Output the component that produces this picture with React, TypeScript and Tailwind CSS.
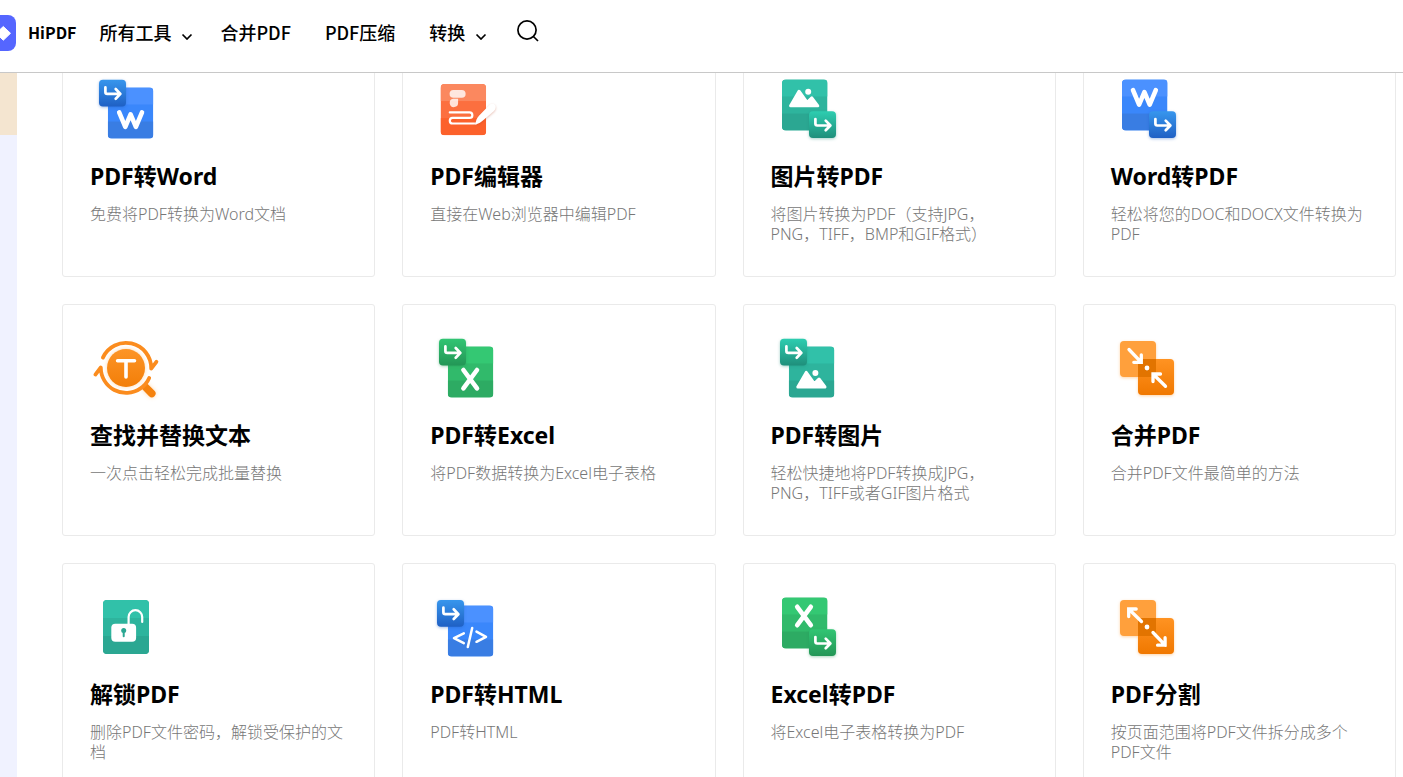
import React, { useId } from "react";
import type { ReactNode } from "react";

type Tone = "blue" | "green" | "teal";

const tones: Record<Tone, { bands: [string, string, string]; badge: [string, string] }> = {
  blue: { bands: ["#4b91ff", "#3a87fb", "#397de3"], badge: ["#3796ed", "#1f60c4"] },
  green: { bands: ["#34c873", "#31ba6b", "#2dab63"], badge: ["#31c573", "#239656"] },
  teal: { bands: ["#31c1a9", "#2eb49d", "#2ba792"], badge: ["#2dcdb0", "#1f8f7b"] },
};

function Sheet({ x, y, w = 45.5, h = 51.2, bands }: { x: number; y: number; w?: number; h?: number; bands: string[] }) {
  const clip = useId();
  const third = h / 3;
  return (
    <>
      <clipPath id={clip}>
        <rect x={x} y={y} width={w} height={h} rx="4" />
      </clipPath>
      <g clipPath={`url(#${clip})`}>
        <rect x={x} y={y} width={w} height={h} fill={bands[1]} />
        <rect x={x} y={y} width={w} height={third} fill={bands[0]} />
        <rect x={x} y={y + third * 2} width={w} height={third} fill={bands[2]} />
      </g>
    </>
  );
}

function Badge({ x, y, tone }: { x: number; y: number; tone: Tone }) {
  const id = useId();
  const [from, to] = tones[tone].badge;
  return (
    <g transform={`translate(${x} ${y})`}>
      <linearGradient id={id} x1="0" y1="0" x2="0" y2="1">
        <stop stopColor={from} />
        <stop offset="1" stopColor={to} />
      </linearGradient>
      <rect
        width="27"
        height="26.8"
        rx="4"
        fill={`url(#${id})`}
        style={{ filter: `drop-shadow(0 1px 1.5px ${to}66)` }}
      />
      <path
        d="M6.4 7.700v4.600q0 1.900 1.900 1.900h12.600M16.700 9.300l4.700 4.900-4.700 4.800"
        fill="none"
        stroke="#fff"
        strokeWidth="2.7"
        strokeLinecap="round"
        strokeLinejoin="round"
      />
    </g>
  );
}

const glyphs = {
  w: (
    <path
      d="M29.2 39.4 35.3 53.9 40.6 41.4 45.9 53.9 52 39.4"
      fill="none"
      stroke="#fff"
      strokeWidth="4.6"
      strokeLinecap="round"
      strokeLinejoin="round"
    />
  ),
  x: <path d="M33.4 38 47 56.4M47 38 33.4 56.4" stroke="#fff" strokeWidth="4.6" strokeLinecap="round" />,
  image: (
    <g fill="#fff" stroke="#fff" strokeLinejoin="round">
      <path d="M26.8 55 35.2 40.4 43.3 51.6 48 47 54 55Z" strokeWidth="3" />
      <circle cx="44.4" cy="41" r="3" stroke="none" />
    </g>
  ),
  code: (
    <path
      d="M33.8 42.4 24 47.2 33.8 52.2M42.2 37 37.8 56M46.5 40.6 56 45.8 46.5 50.8"
      fill="none"
      stroke="#fff"
      strokeWidth="2.5"
      strokeLinecap="round"
      strokeLinejoin="round"
    />
  ),
};

function IconFrame({ children }: { children: ReactNode }) {
  return (
    <svg className="block size-[72px]" viewBox="0 0 72 72" aria-hidden="true">
      {children}
    </svg>
  );
}

function FromPdf({ tone, glyph, badgeX = 9, badgeY = 6.7 }: { tone: Tone; glyph: ReactNode; badgeX?: number; badgeY?: number }) {
  return (
    <IconFrame>
      <Sheet x={17.8} y={14.4} bands={tones[tone].bands} />
      {glyph}
      <Badge x={badgeX} y={badgeY} tone={tone} />
    </IconFrame>
  );
}

function ToPdf({ tone, glyph }: { tone: Tone; glyph: ReactNode }) {
  return (
    <IconFrame>
      <Sheet x={11} y={6.4} bands={tones[tone].bands} />
      <g transform="translate(-7.2 -22.2)">{glyph}</g>
      <Badge x={38} y={38.3} tone={tone} />
    </IconFrame>
  );
}

function EditorIcon() {
  return (
    <IconFrame>
      <Sheet x={10.6} y={11} bands={["#fb885f", "#fc6f3f", "#fc612b"]} />
      <rect x="19.6" y="17" width="16" height="7.7" rx="3.8" fill="#fff" opacity=".8" />
      <path d="M23.2 25.8h4.9v3.8a4.2 4.2 0 1 1-4.9-3.8Z" fill="#fff" opacity=".8" />
      <path
        d="M19.8 39.4H39.6a2.7 2.7 0 0 1 0 5.5H22.6a2.8 2.8 0 0 0 0 5.6H46"
        fill="none"
        stroke="#fff"
        strokeWidth="2.2"
        strokeLinecap="round"
      />
      <path
        d="M45.4 51.6c.3-3.9 1.4-6.8 3.800-9.200L59.200 32.200c2-2 4.200-1.900 5.600-.5s1.200 4.200-.8 6.200L53.800 46.800c-2.400 2.100-5 4-8.400 4.800Z"
        fill="#fff"
        style={{ filter: "drop-shadow(0 1px 1px #b9432055)" }}
      />
    </IconFrame>
  );
}

function FindReplaceIcon() {
  const id = useId();
  return (
    <IconFrame>
      <linearGradient id={id} x1="0" y1="8" x2="0" y2="65" gradientUnits="userSpaceOnUse">
        <stop stopColor="#ff9a2e" />
        <stop offset="1" stopColor="#f07800" />
      </linearGradient>
      <g style={{ filter: "drop-shadow(0 0 2px #ff9a2e66)" }}>
        <circle cx="36" cy="36" r="19" fill={`url(#${id})`} />
        <path d="M55.5 55.200 61.800 61.500" stroke="#f5810c" strokeWidth="7.5" strokeLinecap="round" />
      </g>
      <g fill="none" stroke="#fb8c1e" strokeWidth="3.8" strokeLinecap="round" strokeLinejoin="round">
        <path d="M12.900 25.600A25.300 25.300 0 0 1 61.200 36.600L66.400 29.800" />
        <path d="M5.400 42.600 10.800 35.500A25.300 25.300 0 0 0 50.500 56.400Q56.200 52.700 59.200 46" />
      </g>
      <path d="M27.600 28.700H44.500M36 28.700V45" stroke="#fff" strokeWidth="3.600" strokeLinecap="round" />
    </IconFrame>
  );
}

function SquaresIcon({ arrows }: { arrows: string }) {
  const id = useId();
  return (
    <IconFrame>
      <linearGradient id={id} x1="0" y1="0" x2="0" y2="1">
        <stop stopColor="#ff9322" />
        <stop offset="1" stopColor="#f07800" />
      </linearGradient>
      <g style={{ filter: "drop-shadow(0 1px 1.5px #ff932266)" }}>
        <rect x="9" y="9" width="36" height="36" rx="4" fill="#ffa03c" />
        <rect x="27" y="27" width="36" height="36" rx="4" fill={`url(#${id})`} />
      </g>
      <path d="M31 27h14v14a4 4 0 0 1-4 4h-14V31a4 4 0 0 1 4-4Z" fill="#e27400" />
      <g transform="translate(.5 0)">
        <path d={arrows} fill="none" stroke="#fff" strokeWidth="3.300" strokeLinecap="round" strokeLinejoin="miter" />
        <circle cx="35.500" cy="36" r="2.400" fill="#fff" />
      </g>
    </IconFrame>
  );
}

function UnlockIcon() {
  return (
    <IconFrame>
      <Sheet x={13} y={9} w={46} h={54} bands={tones.teal.bands} />
      <rect x="21.300" y="32.700" width="24.800" height="18" rx="4" fill="#fff" />
      <path d="M38.600 34V26a6.800 6.800 0 0 1 13.600 0V31" fill="none" stroke="#fff" strokeWidth="2.200" strokeLinecap="round" />
      <circle cx="33.700" cy="39.500" r="2.500" fill="#2ba792" />
      <path d="M33.700 40V45.200" stroke="#2ba792" strokeWidth="2" strokeLinecap="round" />
    </IconFrame>
  );
}

const tools: { title: string; text: string; icon: ReactNode }[] = [
  { title: "PDF转Word", text: "免费将PDF转换为Word文档", icon: <FromPdf tone="blue" glyph={glyphs.w} /> },
  { title: "PDF编辑器", text: "直接在Web浏览器中编辑PDF", icon: <EditorIcon /> },
  { title: "图片转PDF", text: "将图片转换为PDF（支持JPG，PNG，TIFF，BMP和GIF格式）", icon: <ToPdf tone="teal" glyph={glyphs.image} /> },
  { title: "Word转PDF", text: "轻松将您的DOC和DOCX文件转换为PDF", icon: <ToPdf tone="blue" glyph={glyphs.w} /> },
  { title: "查找并替换文本", text: "一次点击轻松完成批量替换", icon: <FindReplaceIcon /> },
  { title: "PDF转Excel", text: "将PDF数据转换为Excel电子表格", icon: <FromPdf tone="green" glyph={glyphs.x} /> },
  { title: "PDF转图片", text: "轻松快捷地将PDF转换成JPG，PNG，TIFF或者GIF图片格式", icon: <FromPdf tone="teal" glyph={glyphs.image} /> },
  {
    title: "合并PDF",
    text: "合并PDF文件最简单的方法",
    icon: (
      <SquaresIcon arrows="M17.500 17.500 29.800 30.300M29.800 22.800V30.300H22.300M54 54.300 41.500 42M49 42H41.500V49.500" />
    ),
  },
  { title: "解锁PDF", text: "删除PDF文件密码，解锁受保护的文档", icon: <UnlockIcon /> },
  { title: "PDF转HTML", text: "PDF转HTML", icon: <FromPdf tone="blue" glyph={glyphs.code} badgeX={7} badgeY={9} /> },
  { title: "Excel转PDF", text: "将Excel电子表格转换为PDF", icon: <ToPdf tone="green" glyph={glyphs.x} /> },
  {
    title: "PDF分割",
    text: "按页面范围将PDF文件拆分成多个PDF文件",
    icon: (
      <SquaresIcon arrows="M30 30.500 17.200 18M24.700 18H17.200V25.500M41.500 41.500 53.600 54.200M53.600 46.700V54.200H46.100" />
    ),
  },
];

function Chevron() {
  return (
    <svg className="mt-2 h-2 w-3" viewBox="0 0 12 8" aria-hidden="true">
      <path d="M1.500 2.500 6 7 10.500 2.500" fill="none" stroke="#000" strokeWidth="1.700" />
    </svg>
  );
}

export default function App() {
  return (
    <div className="h-screen overflow-hidden bg-white font-['Noto_Sans','Noto_Sans_CJK_SC',sans-serif] text-black">
      <header className="fixed inset-x-0 top-0 z-10 flex h-[73px] items-center border-b border-[#c8c8c8] bg-white pb-2 font-['Noto_Sans_CJK_SC',sans-serif] text-lg leading-6 font-medium whitespace-nowrap">
        <a href="#" className="flex items-center gap-3 text-base font-bold">
          <svg className="mt-[2px] h-9 w-4" viewBox="0 0 16 36" aria-hidden="true">
            <rect x="-20" width="36" height="36" rx="8" fill="#5566ff" />
            <path d="M3.300 11.500 10.500 18.300 3.300 25.200-4 18.300Z" fill="#fff" stroke="#fff" strokeLinejoin="round" />
          </svg>
          HiPDF
        </a>
        <nav className="ml-[23px] flex items-center gap-[34px]">
          <button className="-mr-[7px] flex items-center gap-[10px]">
            所有工具
            <Chevron />
          </button>
          <a href="#">合并PDF</a>
          <a href="#">PDF压缩</a>
          <button className="flex items-center gap-[10px]">
            转换
            <Chevron />
          </button>
        </nav>
        <button className="ml-[29px]" aria-label="搜索">
          <svg className="-mt-1 size-6" viewBox="0 0 24 24" fill="none" stroke="#000" strokeWidth="1.700" aria-hidden="true">
            <circle cx="11" cy="12" r="9.100" />
            <path d="M17.400 18.500 22 23" />
          </svg>
        </button>
      </header>
      <div className="flex h-full">
        <aside className="flex w-[17px] shrink-0 flex-col">
          <div className="h-[135px] bg-[#f4e5d0]" />
          <div className="flex-1 bg-[#f0f2ff]" />
        </aside>
        <main className="grid flex-1 auto-rows-[232px] grid-cols-4 gap-[27px] pt-[45px] pr-[7px] pl-[45px]">
          {tools.map((tool) => (
            <a key={tool.title} href="#" className="block rounded-[3px] border border-[#eaeaea] p-[27px]">
              {tool.icon}
              <h2 className="mt-[15px] text-[23px] leading-8 font-bold">{tool.title}</h2>
              <p className="mt-3 text-base leading-5 font-light text-[#777]">{tool.text}</p>
            </a>
          ))}
        </main>
      </div>
    </div>
  );
}
